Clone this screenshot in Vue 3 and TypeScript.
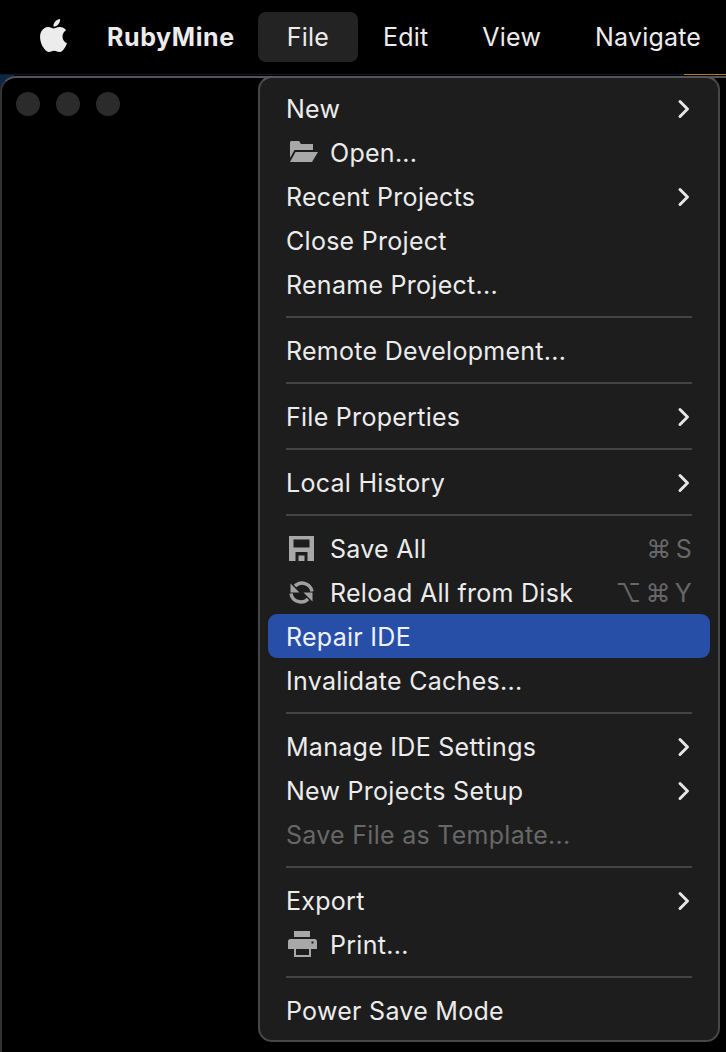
<script setup lang="ts">
type Row = {
  label?: string
  sep?: boolean
  arrow?: boolean
  icon?: 'open' | 'save' | 'reload' | 'print'
  keys?: string[]
  active?: boolean
  disabled?: boolean
}
const rows: Row[] = [
  { label: 'New', arrow: true },
  { label: 'Open...', icon: 'open' },
  { label: 'Recent Projects', arrow: true },
  { label: 'Close Project' },
  { label: 'Rename Project...' },
  { sep: true },
  { label: 'Remote Development...' },
  { sep: true },
  { label: 'File Properties', arrow: true },
  { sep: true },
  { label: 'Local History', arrow: true },
  { sep: true },
  { label: 'Save All', icon: 'save', keys: ['⌘', 'S'] },
  { label: 'Reload All from Disk', icon: 'reload', keys: ['⌥', '⌘', 'Y'] },
  { label: 'Repair IDE', active: true },
  { label: 'Invalidate Caches...' },
  { sep: true },
  { label: 'Manage IDE Settings', arrow: true },
  { label: 'New Projects Setup', arrow: true },
  { label: 'Save File as Template...', disabled: true },
  { sep: true },
  { label: 'Export', arrow: true },
  { label: 'Print...', icon: 'print' },
  { sep: true },
  { label: 'Power Save Mode' },
]
const menus = ['Edit', 'View', 'Navigate']
</script>

<template>
  <div class="screen">
    <header class="bar">
      <svg class="apple" viewBox="0 0 24 24" width="33" height="33" aria-hidden="true">
        <path fill="#ececec" d="M12.152 6.896c-.948 0-2.415-1.078-3.96-1.04-2.04.027-3.91 1.183-4.961 3.014-2.117 3.675-.546 9.103 1.519 12.09 1.013 1.454 2.208 3.09 3.792 3.039 1.52-.065 2.09-.987 3.935-.987 1.831 0 2.35.987 3.96.948 1.637-.026 2.676-1.48 3.676-2.948 1.156-1.688 1.636-3.325 1.662-3.415-.039-.013-3.182-1.221-3.22-4.857-.026-3.04 2.48-4.494 2.597-4.559-1.429-2.09-3.623-2.324-4.39-2.376-2-.156-3.675 1.09-4.61 1.09zM15.53 3.83c.843-1.012 1.4-2.427 1.245-3.83-1.207.052-2.662.805-3.532 1.818-.78.896-1.454 2.338-1.273 3.714 1.338.104 2.715-.688 3.559-1.701" />
      </svg>
      <span class="brand">RubyMine</span>
      <span class="file">File</span>
      <span v-for="m in menus" :key="m" class="top-item">{{ m }}</span>
    </header>
    <div class="strip"><span class="strip-accent"></span></div>
    <div class="corner"></div>

    <div class="window">
      <div class="lights"><i></i><i></i><i></i></div>
    </div>

    <nav class="menu">
      <template v-for="(r, i) in rows" :key="i">
        <div v-if="r.sep" class="sep"><span></span></div>
        <div v-else class="row" :class="{ active: r.active, disabled: r.disabled }">
          <span v-if="r.icon" class="ico">
            <svg v-if="r.icon === 'open'" class="ico-open" viewBox="0 0 28 21" width="28" height="21" aria-hidden="true">
              <path fill="#a8a8a8" d="M1 0h8l2 3h12v6H4.500L0 17V1z" />
              <path fill="#a8a8a8" d="M5.500 11H28l-6 10H0z" />
            </svg>
            <svg v-else-if="r.icon === 'save'" viewBox="0 0 25 25" width="25" height="25" aria-hidden="true">
              <path fill="#a8a8a8" fill-rule="evenodd" d="M0 0h25v25H0zM4.500 3.500v8h16v-8zM6.500 16v9h12v-9zM9.500 19.500h6V25h-6z" />
            </svg>
            <svg v-else-if="r.icon === 'reload'" viewBox="0 0 25 25" width="25" height="25" fill="none" aria-hidden="true">
              <path stroke="#a0a0a0" stroke-width="3.400" d="M23 11.500A10 10 0 0 0 6 6" />
              <path stroke="#a0a0a0" stroke-width="3.400" d="M2 13.500A10 10 0 0 0 19 19" />
              <path fill="#a0a0a0" d="M1.500 3.500v9h9zM23.500 21.500v-9h-9z" />
            </svg>
            <svg v-else class="ico-print" viewBox="0 0 29 26" width="29" height="26" aria-hidden="true">
              <path fill="#a8a8a8" d="M6 0h16v6H6z" />
              <path fill="#a8a8a8" fill-rule="evenodd" d="M2.500 8h24a2.500 2.500 0 0 1 2.500 2.500V18h-7v-2H7v2H0v-7.500A2.500 2.500 0 0 1 2.500 8zM25.500 10.500h-2v2h2z" />
              <path fill="none" stroke="#a8a8a8" stroke-width="2" d="M7 17h15v8H7z" />
            </svg>
          </span>
          <span class="label">{{ r.label }}</span>
          <span v-if="r.keys" class="keys">
            <span v-for="k in r.keys" :key="k" class="key">{{ k }}</span>
          </span>
          <svg v-if="r.arrow" class="arrow" viewBox="0 0 14 20" width="14" height="20" fill="none" aria-hidden="true">
            <path stroke="#e6e6e6" stroke-width="3" stroke-linecap="round" stroke-linejoin="round" d="M3 2.500 10.500 10 3 17.500" />
          </svg>
        </div>
      </template>
    </nav>
  </div>
</template>

<style>
html, body { margin: 0; background: #000; }
</style>

<style scoped>
.screen {
  position: relative;
  width: 726px;
  height: 1052px;
  overflow: hidden;
  background: #000;
  font-family: Inter, "Liberation Sans", sans-serif;
  font-size: 25px;
  letter-spacing: 0.28px;
  color: #ececec;
}
.bar {
  display: flex;
  align-items: center;
  height: 74px;
  padding-left: 37px;
  box-sizing: border-box;
  white-space: nowrap;
  letter-spacing: 0.2px;
}
.apple { margin-top: -3px; flex: none; }
.brand { margin-left: 37px; font-weight: 700; letter-spacing: 0.6px; }
.file {
  margin-left: 23px;
  padding: 0 29px;
  height: 50px;
  line-height: 50px;
  margin-top: -1px;
  border-radius: 8px;
  background: #232323;
}
.top-item { margin-left: 54px; }
.file + .top-item { margin-left: 25px; }
.strip {
  height: 1px;
  background: #0b1a2e;
  position: relative;
}
.strip-accent {
  position: absolute;
  left: 684px;
  right: 0;
  top: 0;
  height: 1px;
  background: #b8782c;
}
.corner {
  position: absolute;
  left: 0;
  top: 75px;
  width: 14px;
  height: 18px;
  background: #0e2744;
}
.window {
  position: absolute;
  left: 0;
  top: 76px;
  width: 780px;
  height: 1100px;
  border: 2px solid #333;
  border-top-color: #555;
  border-radius: 16px;
  background: #000;
  box-sizing: border-box;
}
.lights {
  display: flex;
  gap: 16px;
  padding: 14px 0 0 14px;
}
.lights i {
  width: 24px;
  height: 24px;
  border-radius: 50%;
  background: #2b2b2b;
}
.menu {
  position: absolute;
  left: 258px;
  top: 76px;
  width: 462px;
  height: 966px;
  box-sizing: border-box;
  padding: 8px 0 0 8px;
  border: 2px solid #474747;
  border-top-color: #555;
  border-radius: 14px;
  background: #1d1d1d;
}
.row {
  display: flex;
  align-items: center;
  width: 442px;
  height: 44px;
  padding: 0 18px 0 18px;
  box-sizing: border-box;
  border-radius: 9px;
  color: #ececec;
  white-space: nowrap;
}
.row.active {
  background: #274fa8;
  color: #f0f2fa;
}
.row.disabled { color: #676767; }
.label { flex: 1; padding-top: 2px; }
.ico {
  flex: none;
  display: flex;
  align-items: center;
  width: 44px;
  margin-left: 3px;
  margin-right: -3px;
}
.ico-open { margin: -1px 0 0 1px; }
.ico-print { margin-left: -1px; }
.arrow { flex: none; margin: 1px 1px 0 7px; }
.keys {
  display: flex;
  gap: 4px;
  padding-top: 2px;
  color: #676767;
}
.sep {
  display: flex;
  align-items: flex-start;
  height: 22px;
  padding: 10px 18px 0 18px;
  width: 442px;
  box-sizing: border-box;
}
.sep span {
  display: block;
  width: 100%;
  height: 2px;
  background: #444;
}
</style>
